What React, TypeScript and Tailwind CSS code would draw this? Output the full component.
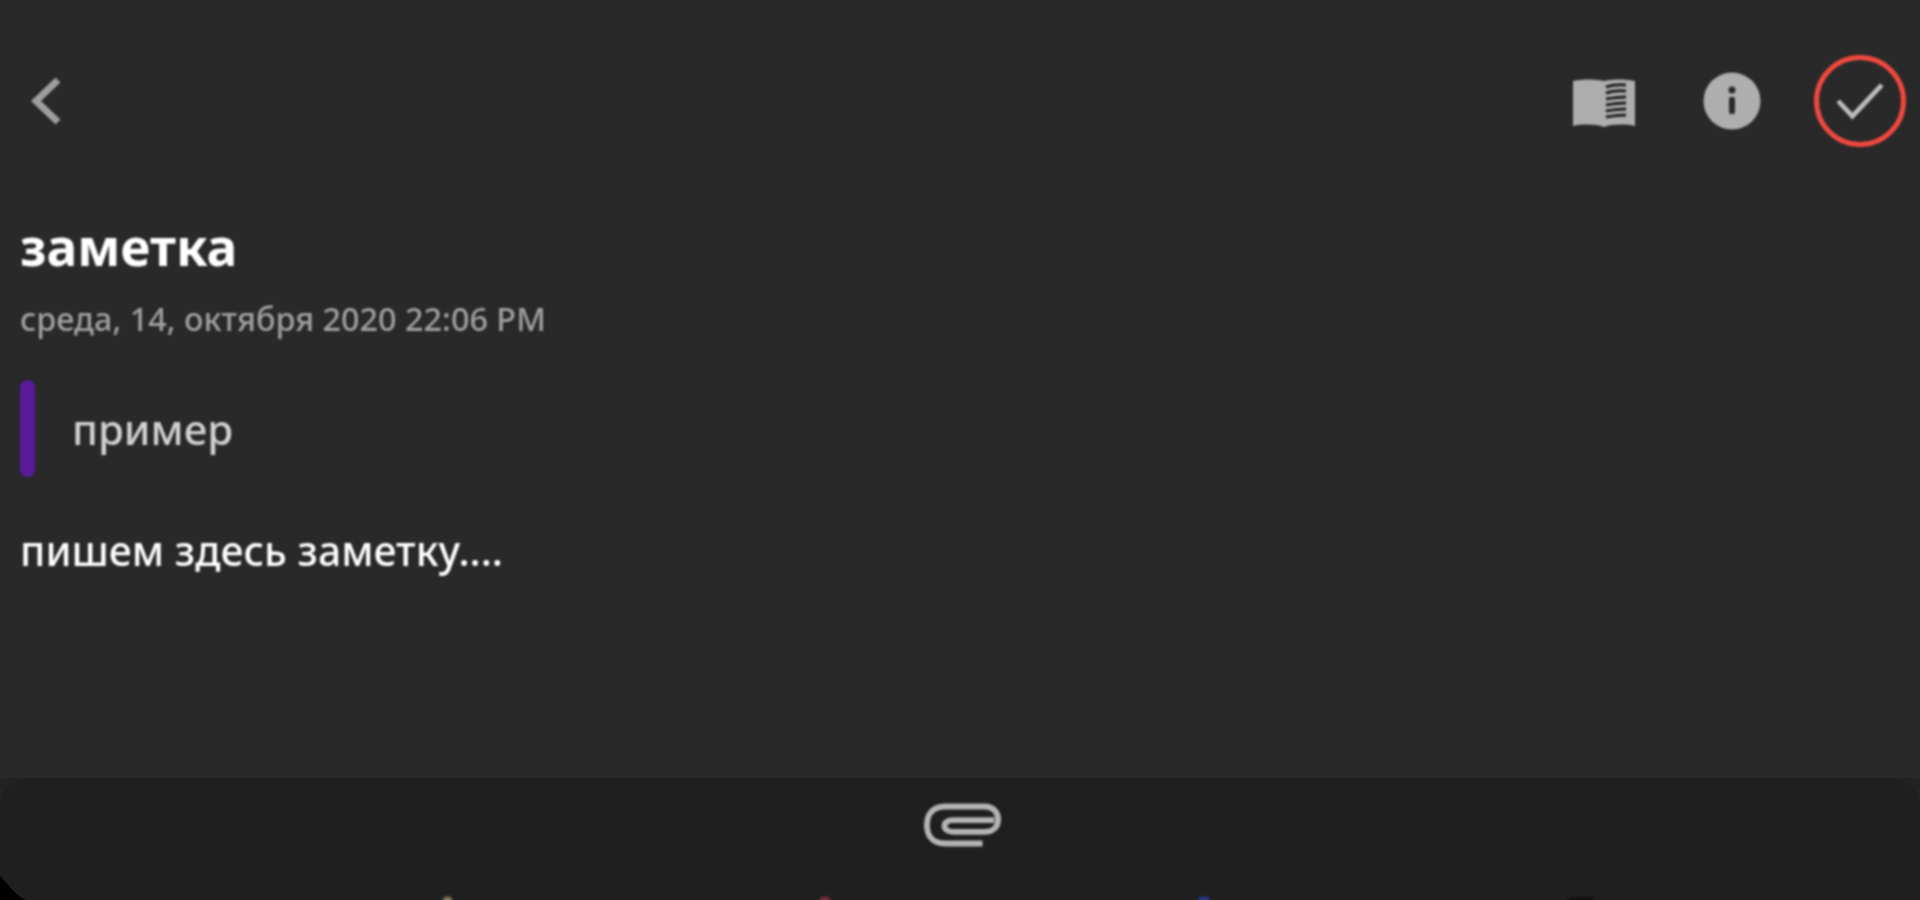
export default function App() {
  return (
    <div className="h-[900px] w-[1920px] overflow-hidden flex flex-col bg-[#292929] font-['Noto_Sans','Liberation_Sans',sans-serif]">
      <div className="flex-1 flex flex-col blur-[1px] pl-5 pr-[14px] pt-[55px]">
        <header className="flex items-center justify-between h-[92px]">
          <svg className="ml-[10px] w-[32px] h-[48px]" viewBox="0 0 32 48" fill="none" stroke="#9e9e9e" strokeWidth="7">
            <path d="M28 3 L6 24 L28 45" />
          </svg>
          <div className="flex items-center">
            <svg className="mt-[4px] w-[64px] h-[50px]" viewBox="0 0 64 50">
              <path fill="#adadad" d="M1 3 C11 1 23 1 32 3 C41 1 53 1 63 3 V48 C53 46 41 46 32 49 C23 46 11 46 1 48 Z" />
              <path fill="none" stroke="#1f1f1f" strokeWidth="3" d="M34 9 C40 7 48 6.500 54 7 M34 15 C40 13 48 12.500 54 13 M34 21 C40 20 48 19 54 19 M34 27 C40 26 48 25 54 25 M34 33 C40 32 48 31 54 31 M34 39 C40 38 48 37 54 37" />
            </svg>
            <svg className="ml-[67px] w-[58px] h-[58px]" viewBox="0 0 58 58">
              <circle cx="29" cy="29" r="28.500" fill="#aeaeae" />
              <circle cx="29" cy="18" r="3.500" fill="#292929" />
              <rect x="26" y="25" width="6" height="17" rx="2" fill="#292929" />
            </svg>
            <div className="ml-[53px] w-[92px] h-[92px] rounded-full border-[5px] border-[#f0493f] flex items-center justify-center">
              <svg className="w-[48px] h-[38px]" viewBox="0 0 50 40" fill="none" stroke="#bcbcbc" strokeWidth="5">
                <path d="M2 20 L17 36 L48 3" />
              </svg>
            </div>
          </div>
        </header>
        <h1 className="mt-[69px] text-[51.500px] leading-[60px] font-bold text-white">заметка</h1>
        <p className="mt-[22px] text-[32.400px] leading-[40px] font-medium text-[#a0a0a0]">среда, 14, октября 2020 22:06 PM</p>
        <div className="mt-[42px] flex items-center h-[97px]">
          <div className="w-[15px] h-full rounded-full bg-[#5a1a9c]" />
          <span className="ml-[37px] text-[42px] leading-[50px] font-medium text-[#d2d2d2]">пример</span>
        </div>
        <p className="mt-[49px] text-[41px] leading-[48px] font-medium text-white">пишем здесь заметку....</p>
      </div>
      <div className="relative h-[122px] bg-[#232323]">
        <div className="h-full rounded-t-[30px] bg-[#1f1f1f] flex justify-center overflow-hidden relative">
          <svg className="ml-[5px] mt-[24px] w-[77px] h-[46px] blur-[0.8px]" viewBox="0 0 79 46" fill="none" stroke="#b4b4b4" strokeWidth="6">
            <path d="M60 42 H22 C8 42 3 33 3 23 C3 12 9 4 22 4 H62 C71 4 76 10 76 17 C76 25 71 30 62 30 H30 C24 30 21 27 21 24 C21 21 24 18 30 18 H72" />
          </svg>
          <span className="absolute bottom-[-3px] left-[443px] w-[9px] h-[6px] rounded-full bg-[#8f8468] blur-[1.5px]" />
          <span className="absolute bottom-[-3px] left-[820px] w-[10px] h-[6px] rounded-full bg-[#8a2a45] blur-[1.5px]" />
          <span className="absolute bottom-[-3px] left-[1198px] w-[12px] h-[6px] rounded-full bg-[#2a3a8a] blur-[1.5px]" />
          <span className="absolute bottom-[-3px] left-[1568px] w-[26px] h-[6px] rounded-full bg-[#111111] blur-[1.5px]" />
        </div>
        <svg className="absolute left-0 bottom-0 w-[26px] h-[24px]" viewBox="0 0 26 24">
          <path fill="#000000" d="M0 0 C8 8 16 20 26 24 H0 Z" />
        </svg>
      </div>
    </div>
  );
}
